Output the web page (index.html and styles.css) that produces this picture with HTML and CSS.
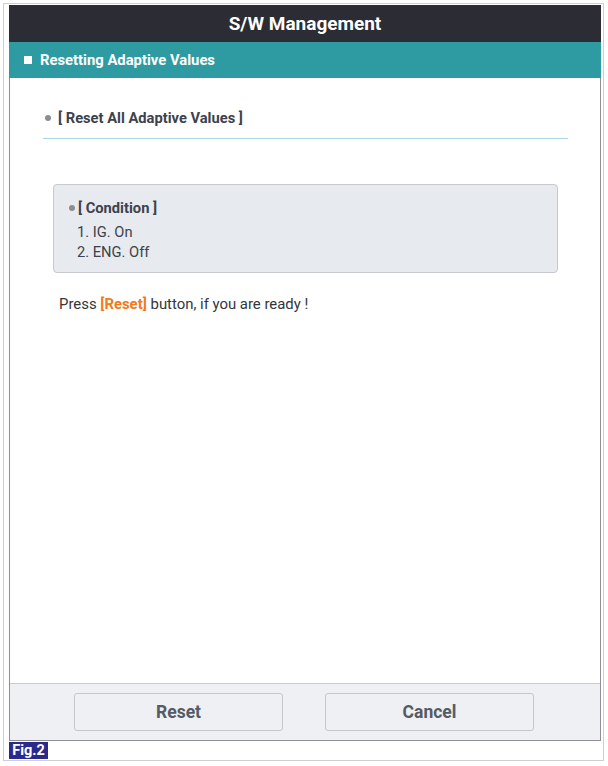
FILE: index.html
```html
<!DOCTYPE html>
<html>
<head>
<meta charset="utf-8">
<link rel="stylesheet" href="styles.css">
</head>
<body>
<div class="frame">
  <div class="panel">
    <div class="title">S/W Management</div>
    <div class="section"><span class="sq"></span>Resetting Adaptive Values</div>
    <div class="body">
      <div class="heading"><span class="dot"></span>[ Reset All Adaptive Values ]</div>
      <div class="cond">
        <div class="cond-title"><span class="dot"></span>[ Condition ]</div>
        <div class="item">1. IG. On</div>
        <div class="item">2. ENG. Off</div>
      </div>
      <div class="press">Press <span class="hl">[Reset]</span> button, if you are ready !</div>
    </div>
    <div class="footer">
      <div class="btn">Reset</div>
      <div class="btn">Cancel</div>
    </div>
  </div>
  <div class="fig">Fig.2</div>
</div>
</body>
</html>
```

FILE: styles.css
```css
html, body {
  margin: 0;
  padding: 0;
  background: #ffffff;
}
body {
  font-family: Roboto, "Liberation Sans", sans-serif;
}
.frame {
  margin: 3px;
  width: 601px;
  height: 758px;
  box-sizing: border-box;
  border: 1px solid #cfcfcf;
  padding: 1px 2px 0 5px;
}
.panel {
  width: 592px;
  height: 736px;
  box-sizing: border-box;
  border: 1px solid #8e9096;
  border-top: none;
  display: flex;
  flex-direction: column;
}
.title {
  height: 37px;
  background: #2b2c34;
  color: #ffffff;
  font-weight: bold;
  font-size: 19px;
  display: flex;
  align-items: center;
  justify-content: center;
  margin: 0 -1px;
}
.section {
  height: 36px;
  background: #2e9ba2;
  color: #ffffff;
  font-weight: bold;
  font-size: 14.8px;
  display: flex;
  align-items: center;
  padding-left: 15px;
  margin: 0 -1px;
}
.sq {
  width: 8px;
  height: 8px;
  background: #ffffff;
  margin-right: 8px;
}
.body {
  flex: 1;
  background: #ffffff;
  padding: 31px 32px 0 33px;
}
.heading {
  display: flex;
  align-items: center;
  font-weight: bold;
  font-size: 14.7px;
  color: #3d424c;
  padding-left: 2px;
  height: 18px;
  padding-bottom: 11px;
  border-bottom: 1px solid #a9d6e2;
}
.dot {
  width: 6px;
  height: 6px;
  border-radius: 50%;
  background: #8a8d93;
  margin-right: 7px;
  flex: none;
}
.cond {
  margin: 45px 10px 0 10px;
  height: 89px;
  box-sizing: border-box;
  background: #e7eaee;
  border: 1px solid #c6c9ce;
  border-radius: 4px;
  padding: 14px 0 0 15px;
  font-size: 14.7px;
  color: #3d424c;
}
.cond-title {
  display: flex;
  align-items: center;
  font-weight: bold;
  height: 18px;
  margin-bottom: 6px;
}
.cond-title .dot {
  margin-right: 3px;
}
.item {
  height: 20px;
  line-height: 18px;
  padding-left: 8px;
}
.press {
  margin: 22px 0 0 16px;
  font-size: 14.9px;
  color: #33363c;
}
.hl {
  color: #f07b1e;
  font-weight: bold;
}
.footer {
  height: 57px;
  box-sizing: border-box;
  background: #eef0f3;
  border-top: 1px solid #c9ccd0;
  display: flex;
  align-items: center;
  justify-content: center;
  gap: 42px;
  padding-right: 2px;
}
.btn {
  width: 209px;
  height: 38px;
  box-sizing: border-box;
  border: 1px solid #c4c7cc;
  border-radius: 3px;
  display: flex;
  align-items: center;
  justify-content: center;
  font-weight: bold;
  font-size: 17.5px;
  color: #555b64;
}
.fig {
  width: 39px;
  height: 17px;
  background: #2a2a8c;
  color: #ffffff;
  font-weight: bold;
  font-size: 14.5px;
  display: flex;
  align-items: center;
  justify-content: center;
  margin-top: 1px;
}
```
